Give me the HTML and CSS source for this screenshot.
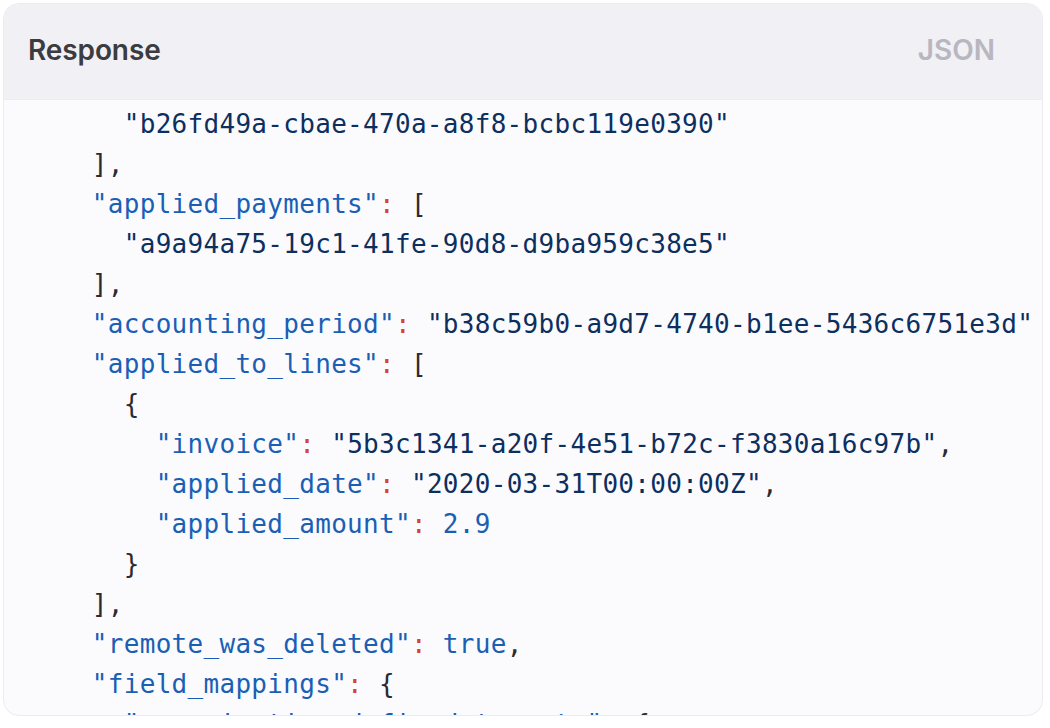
FILE: index.html
```html
<!DOCTYPE html>
<html>
<head>
<meta charset="utf-8">
<link rel="stylesheet" href="styles.css">
</head>
<body>
<div class="card">
  <div class="card-header">
    <span class="title">Response</span>
    <span class="lang">JSON</span>
  </div>
  <div class="card-body">
<pre class="code"><span class="p">      </span><span class="s">"b26fd49a-cbae-470a-a8f8-bcbc119e0390"</span>
<span class="p">    ],</span>
    <span class="k">"applied_payments"</span><span class="c">:</span> <span class="p">[</span>
      <span class="s">"a9a94a75-19c1-41fe-90d8-d9ba959c38e5"</span>
<span class="p">    ],</span>
    <span class="k">"accounting_period"</span><span class="c">:</span> <span class="s">"b38c59b0-a9d7-4740-b1ee-5436c6751e3d"</span>
    <span class="k">"applied_to_lines"</span><span class="c">:</span> <span class="p">[</span>
<span class="p">      {</span>
        <span class="k">"invoice"</span><span class="c">:</span> <span class="s">"5b3c1341-a20f-4e51-b72c-f3830a16c97b"</span><span class="p">,</span>
        <span class="k">"applied_date"</span><span class="c">:</span> <span class="s">"2020-03-31T00:00:00Z"</span><span class="p">,</span>
        <span class="k">"applied_amount"</span><span class="c">:</span> <span class="k">2.9</span>
<span class="p">      }</span>
<span class="p">    ],</span>
    <span class="k">"remote_was_deleted"</span><span class="c">:</span> <span class="k">true</span><span class="p">,</span>
    <span class="k">"field_mappings"</span><span class="c">:</span> <span class="p">{</span>
      <span class="k">"organization_defined_targets"</span><span class="c">:</span> <span class="p">{</span>
        <span class="k">"custom_key"</span><span class="c">:</span> <span class="s">"custom_value"</span></pre>
  </div>
</div>
</body>
</html>
```

FILE: styles.css
```css
html, body {
  margin: 0;
  padding: 0;
  background: #ffffff;
}

body {
  padding: 3px 6px 12px 3px;
  font-family: Inter, "Noto Sans", sans-serif;
}

.card {
  width: 1040px;
  height: 713px;
  box-sizing: border-box;
  border: 1.5px solid #ebebf0;
  border-radius: 16px;
  overflow: hidden;
  background: #fbfbfe;
  display: flex;
  flex-direction: column;
}

.card-header {
  height: 96px;
  flex: none;
  box-sizing: border-box;
  background: #f1f0f5;
  display: flex;
  align-items: center;
  justify-content: space-between;
  padding: 0 47px 4px 24px;
  border-bottom: 1px solid #ececf1;
}

.title {
  font-size: 28px;
  font-weight: 600;
  color: #3b3b40;
  letter-spacing: -0.1px;
}

.lang {
  font-size: 28px;
  font-weight: 600;
  color: #b8b7c0;
}

.card-body {
  flex: 1;
  overflow: hidden;
  padding: 4px 0 0 24px;
}

.code {
  margin: 0;
  font-family: "DejaVu Sans Mono", "Liberation Mono", monospace;
  font-size: 26px;
  line-height: 40px;
  letter-spacing: 0.3px;
  color: #24292f;
  white-space: pre;
}

.k { color: #1a5fb4; }
.s { color: #0d2f5e; }
.c { color: #d1453b; }
.p { color: #2b2b2f; }
```
